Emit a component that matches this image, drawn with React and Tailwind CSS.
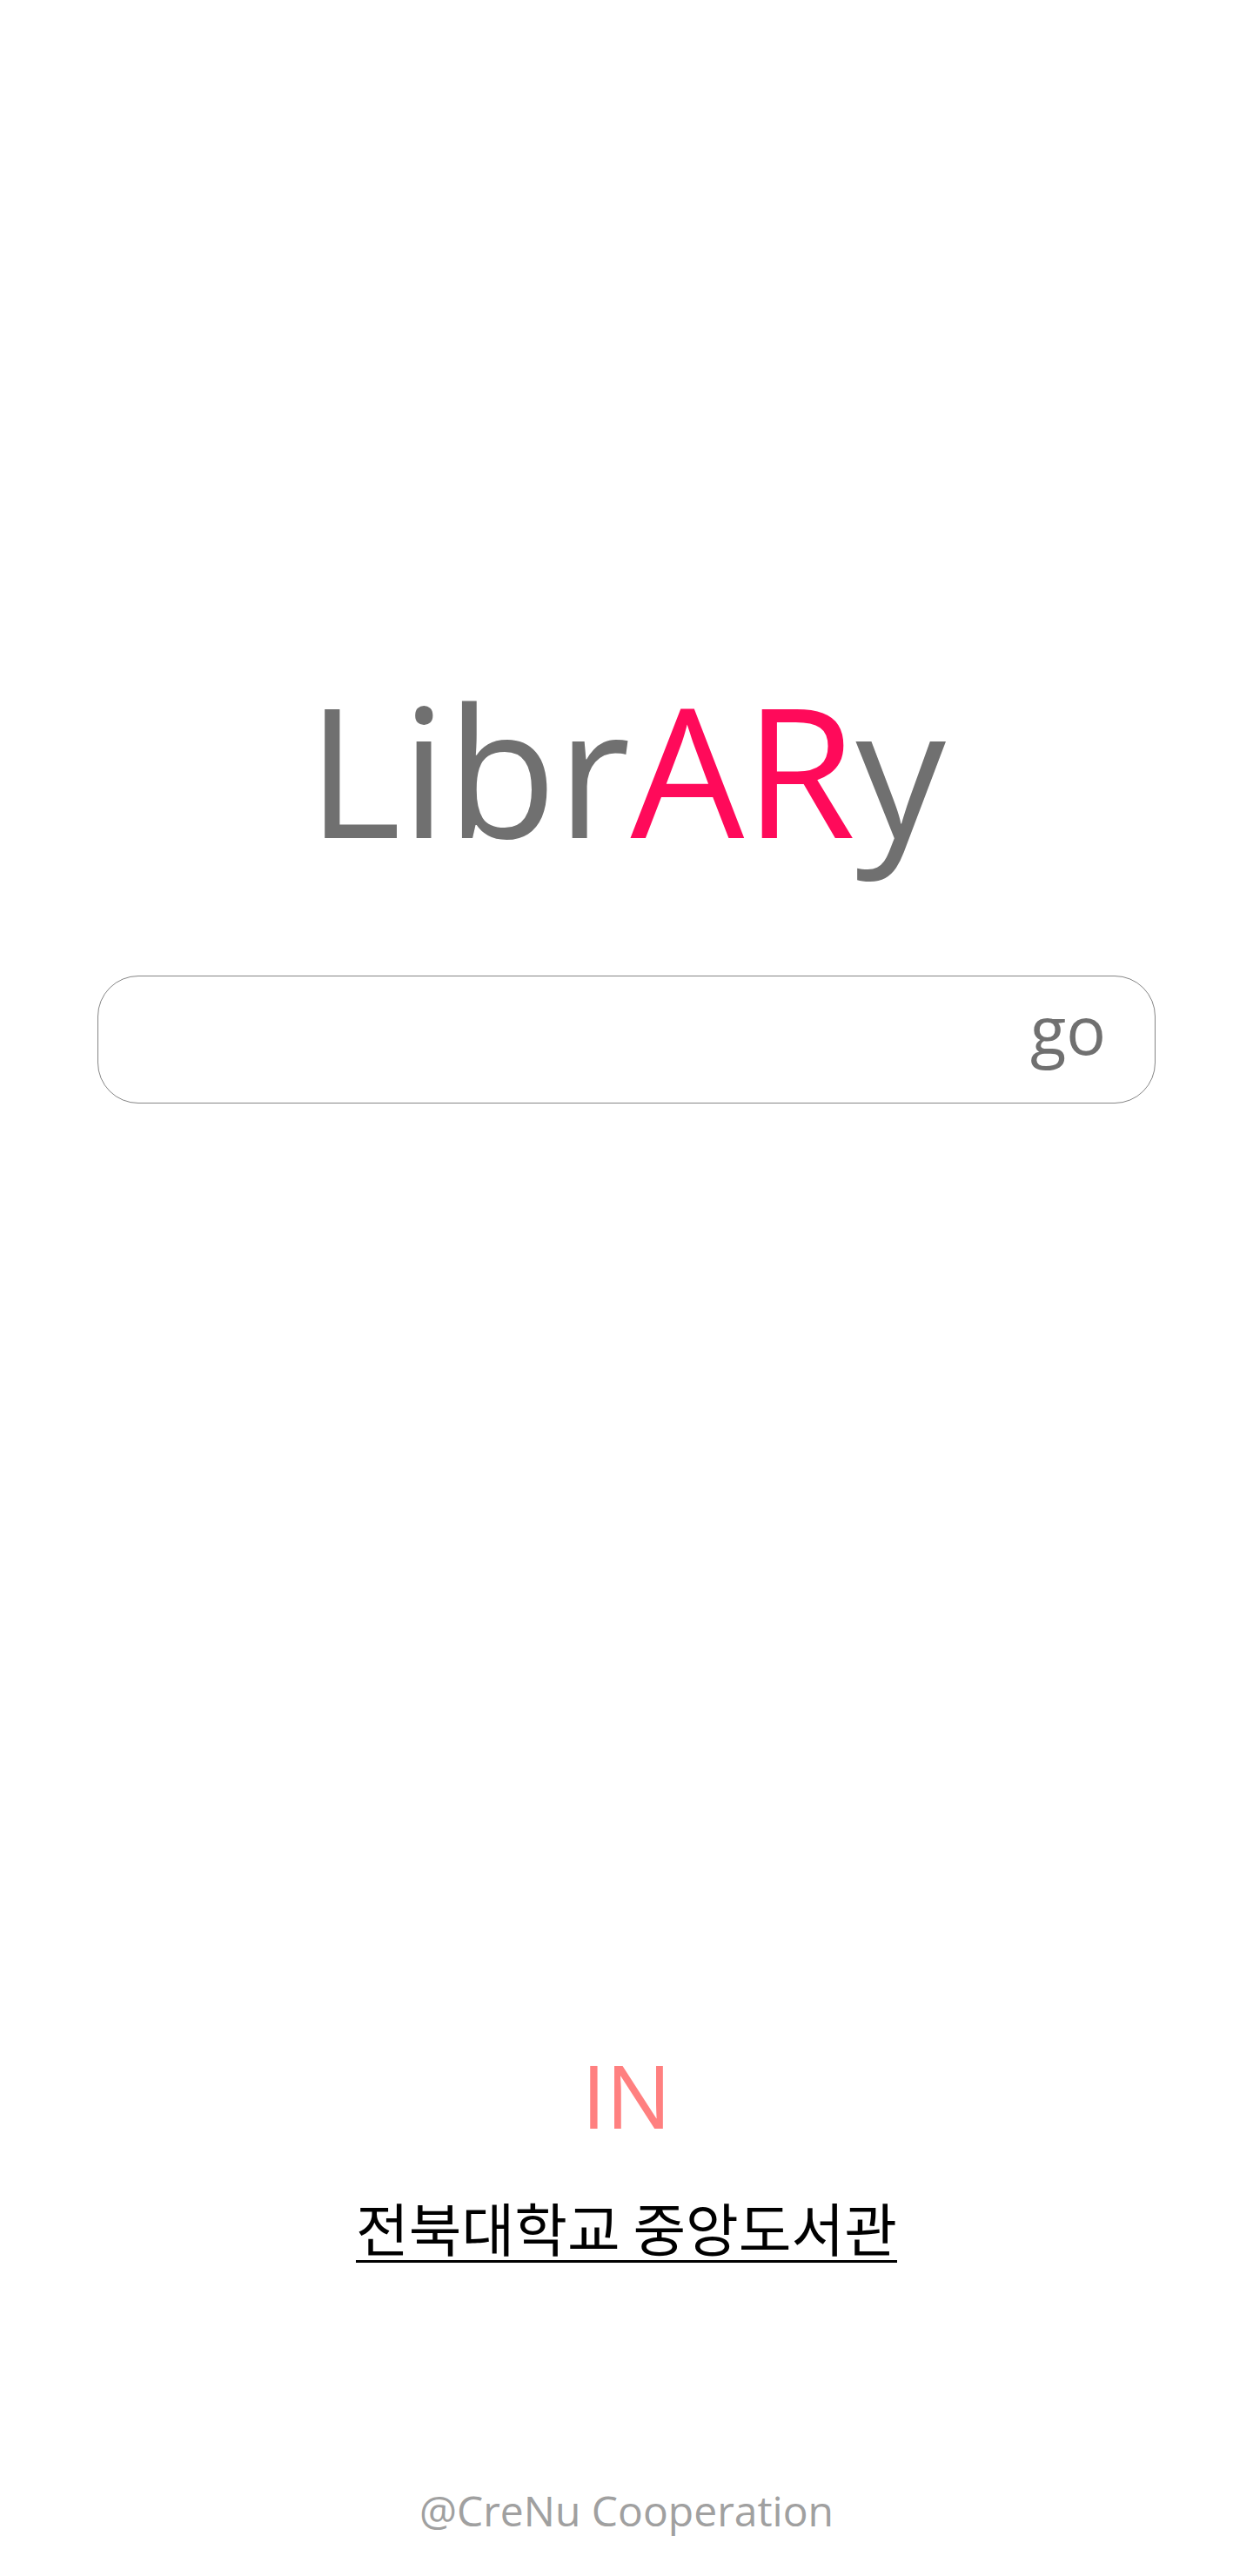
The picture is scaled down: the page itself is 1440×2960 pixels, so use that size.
export default function App() {
  return (
    <div className="min-h-[2960px] bg-white flex flex-col items-center font-['Open_Sans',sans-serif]">
      {/* logo */}
      <h1 className="mt-[780px] text-[207px] leading-none text-[#707070] font-normal">
        Libr<span className="text-[#ff0a5a]">AR</span>y
      </h1>

      {/* search */}
      <div className="mt-[134px] w-[1216px] h-[147px] border border-[#858585] rounded-[47px] flex justify-end items-start pt-[23px] pr-[56px]">
        <input className="flex-1 outline-none bg-transparent px-10 text-[60px]" />
        <span className="text-[76px] leading-none text-[#707070]">go</span>
      </div>

      <div className="mt-[1089px] text-[100px] leading-none text-[#ff8080]">IN</div>

      <a className="mt-[68px] text-[66px] leading-none text-black underline decoration-[3px] underline-offset-[10px] font-['Noto_Sans_CJK_KR','Noto_Sans',sans-serif]">
        전북대학교 중앙도서관
      </a>

      <div className="mt-[270px] text-[48px] leading-none text-[#a0a0a0]">@CreNu Cooperation</div>
    </div>
  )
}
